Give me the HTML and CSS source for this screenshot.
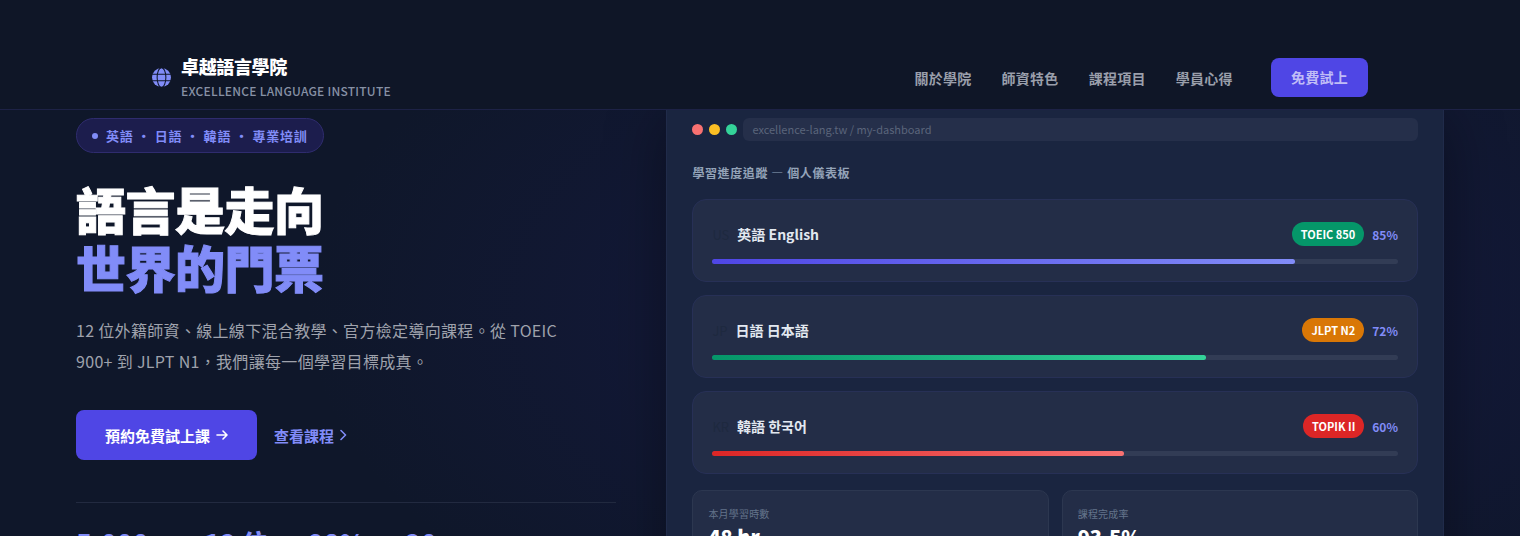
FILE: index.html
```
<!DOCTYPE html>
<html lang="zh-Hant">
<head>
    <meta charset="UTF-8">
    <meta name="viewport" content="width=device-width, initial-scale=1.0">
    <title>卓越語言學院</title>
    <link rel="stylesheet" href="styles.css">
</head>
<body>
<header class="site-header">
    <a class="logo" href="#">
        <svg class="logo-icon" viewBox="0 0 20 20" aria-hidden="true">
            <circle cx="10" cy="10" r="10" fill="#818cf8"/>
            <g fill="none" stroke="#0f172a" stroke-width="1.1">
                <ellipse cx="10" cy="10" rx="4.6" ry="10.400"/>
                <path d="M0 6.6h20M0 13.4h20"/>
            </g>
        </svg>
        <span class="logo-text">
            <span class="logo-name">卓越語言學院</span>
            <span class="logo-sub">EXCELLENCE LANGUAGE INSTITUTE</span>
        </span>
    </a>
    <nav class="nav">
        <a href="#about">關於學院</a>
        <a href="#teachers">師資特色</a>
        <a href="#courses">課程項目</a>
        <a href="#reviews">學員心得</a>
        <a class="nav-cta" href="#trial">免費試上</a>
    </nav>
</header>

<main class="hero">
    <section class="hero-copy">
        <div class="hero-tag"><i class="tag-dot"></i>英語 ・ 日語 ・ 韓語 ・ 專業培訓</div>
        <h1 class="hero-title">語言是走向<br><span>世界的門票</span></h1>
        <p class="hero-desc">12 位外籍師資、線上線下混合教學、官方檢定導向課程。從 TOEIC 900+ 到 JLPT N1，我們讓每一個學習目標成真。</p>
        <div class="hero-actions">
            <button class="btn-primary" type="button">預約免費試上課
                <svg width="12" height="12" viewBox="0 0 12 12" aria-hidden="true"><path d="M1 6h10M7 2l4 4-4 4"/></svg>
            </button>
            <a class="btn-link" href="#courses">查看課程
                <svg width="8" height="12" viewBox="0 0 8 12" aria-hidden="true"><path d="M1 1.500L5.500 6L1 10.500"/></svg>
            </a>
        </div>
        <div class="hero-stats">
            <div class="stat">5,000+</div>
            <div class="stat">12 位</div>
            <div class="stat">98%</div>
            <div class="stat">20+</div>
        </div>
    </section>

    <section class="dashboard">
        <div class="window-bar">
            <i class="dot dot-red"></i>
            <i class="dot dot-yellow"></i>
            <i class="dot dot-green"></i>
            <div class="window-url">excellence-lang.tw / my-dashboard</div>
        </div>
        <h2 class="dashboard-title">學習進度追蹤 — 個人儀表板</h2>
        <div class="course-list">
            <div class="course">
                <div class="course-head">
                    <span class="flag">US</span>
                    <span class="course-name">英語 English</span>
                    <span class="badge badge-green">TOEIC 850</span>
                    <span class="percent">85%</span>
                </div>
                <div class="track"><div class="fill fill-indigo" style="width: 85%"></div></div>
            </div>
            <div class="course">
                <div class="course-head">
                    <span class="flag">JP</span>
                    <span class="course-name">日語 日本語</span>
                    <span class="badge badge-orange">JLPT N2</span>
                    <span class="percent">72%</span>
                </div>
                <div class="track"><div class="fill fill-green" style="width: 72%"></div></div>
            </div>
            <div class="course">
                <div class="course-head">
                    <span class="flag">KR</span>
                    <span class="course-name">韓語 한국어</span>
                    <span class="badge badge-red">TOPIK II</span>
                    <span class="percent">60%</span>
                </div>
                <div class="track"><div class="fill fill-red" style="width: 60%"></div></div>
            </div>
        </div>
        <div class="summary">
            <div class="summary-card">
                <div class="summary-label">本月學習時數</div>
                <div class="summary-value">48 hr</div>
            </div>
            <div class="summary-card">
                <div class="summary-label">課程完成率</div>
                <div class="summary-value">93.5%</div>
            </div>
        </div>
    </section>
</main>
</body>
</html>
```
FILE: styles.css
```
*{
    box-sizing: border-box;
    margin: 0;
    padding: 0;
}
body{
    background: #0f172a;
    color: #fff;
    font-family: "Noto Sans CJK TC", "Noto Sans", sans-serif;
    font-size: 16px;
}
a{
    color: inherit;
    text-decoration: none;
}

/* header */
.site-header{
    position: fixed;
    top: 0;
    left: 0;
    right: 0;
    z-index: 10;
    display: flex;
    align-items: center;
    justify-content: space-between;
    padding: 46px 10% 0;
    height: 110px;
    background: #0f1627;
    border-bottom: 1px solid #1d2246;
}
.logo{
    display: flex;
    align-items: center;
    gap: 10px;
}
.logo-icon{
    width: 19px;
    height: 19px;
}
.logo-text{
    display: flex;
    flex-direction: column;
}
.logo-name{
    font-size: 18px;
    line-height: 26px;
    font-weight: 900;
    letter-spacing: -0.02em;
}
.logo-sub{
    font-size: 12px;
    line-height: 24px;
    letter-spacing: 0.02em;
    font-weight: 500;
    color: #8791a5;
}
.nav{
    display: flex;
    align-items: center;
    gap: 30px;
    font-size: 14px;
    font-weight: 600;
    letter-spacing: 0.02em;
    color: #9a9fab;
}
.nav-cta{
    margin-left: 8px;
    padding: 0 20px;
    line-height: 39px;
    border-radius: 8px;
    background: #4f46e5;
    color: #c0bdf6;
}

/* hero */
.hero{
    display: grid;
    grid-template-columns: 41fr 59fr;
    gap: 50px;
    height: 100vh;
    overflow: hidden;
    padding: 92px 5% 0;
    background: radial-gradient(ellipse 50% 75% at 70% 58%, rgba(36, 32, 120, 0.32), transparent);
}
.hero-copy{
    padding-top: 26px;
}
.hero-tag{
    display: inline-flex;
    align-items: center;
    gap: 8px;
    height: 35px;
    padding: 0 15px;
    border: 1px solid #2f2c6e;
    border-radius: 18px;
    background: #1c1d4d;
    color: #818cf8;
    font-size: 13px;
    font-weight: 600;
    letter-spacing: 0.06em;
}
.tag-dot{
    width: 6px;
    height: 6px;
    border-radius: 50%;
    background: #818cf8;
}
.hero-title{
    margin-top: 26px;
    font-size: 50px;
    line-height: 58px;
    font-weight: 900;
    letter-spacing: -0.01em;
    -webkit-text-stroke: 1px;
}
.hero-title span{
    color: #818cf8;
}
.hero-desc{
    max-width: 500px;
    margin-top: 20px;
    line-height: 31px;
    letter-spacing: 0.02em;
    color: #9fa2ac;
}
.hero-actions{
    display: flex;
    align-items: center;
    gap: 17px;
    margin-top: 33px;
}
.hero-actions svg{
    fill: none;
    stroke: currentColor;
    stroke-width: 1.6;
    stroke-linecap: round;
    stroke-linejoin: round;
}
.btn-primary,
.btn-link{
    display: flex;
    align-items: center;
    gap: 6px;
    font: inherit;
    font-size: 15px;
    font-weight: 700;
}
.btn-primary{
    height: 50px;
    padding: 0 29px;
    border: none;
    border-radius: 8px;
    background: #4f46e5;
    color: #fff;
    cursor: pointer;
}
.btn-link{
    color: #818cf8;
}
.hero-stats{
    display: flex;
    gap: 40px;
    margin-top: 42px;
    padding-top: 20px;
    border-top: 1px solid #222a40;
}
.stat{
    font-size: 26px;
    line-height: 40px;
    font-weight: 900;
    color: #818cf8;
}

/* dashboard */
.dashboard{
    padding: 25px;
    border: 1px solid #202b4a;
    border-radius: 16px;
    background: #1a2540;
    box-shadow: 0 24px 60px rgba(0, 0, 0, 0.4);
}
.window-bar{
    display: flex;
    align-items: center;
    gap: 6px;
}
.dot{
    width: 11px;
    height: 11px;
    border-radius: 50%;
}
.dot-red{
    background: #f87171;
}
.dot-yellow{
    background: #fbbf24;
}
.dot-green{
    background: #34d399;
}
.window-url{
    flex: 1;
    padding: 0 9px;
    border-radius: 6px;
    background: #252f4a;
    color: #5b657b;
    font-size: 11px;
    line-height: 23px;
}
.dashboard-title{
    margin: 21px 0 15px;
    font-size: 12px;
    line-height: 22px;
    font-weight: 600;
    letter-spacing: 0.05em;
    color: #94a3b8;
}
.course-list{
    display: grid;
    gap: 13px;
}
.course{
    padding: 17px 19px;
    border: 1px solid #273056;
    border-radius: 14px;
    background: #232d47;
}
.course-head{
    display: flex;
    align-items: center;
    gap: 8px;
    height: 34px;
    margin-bottom: 8px;
}
.flag{
    font-size: 13px;
    color: #1e293f;
}
.course-name{
    flex: 1;
    font-size: 14px;
    font-weight: 700;
    color: #e2e8f0;
}
.badge{
    padding: 0 9px;
    border-radius: 12px;
    font-size: 11px;
    line-height: 24px;
    font-weight: 700;
}
.badge-green{
    background: #059669;
}
.badge-orange{
    background: #d97706;
}
.badge-red{
    background: #dc2626;
}
.percent{
    font-size: 12px;
    font-weight: 600;
    color: #818cf8;
}
.track{
    height: 5px;
    border-radius: 3px;
    background: #323c55;
}
.fill{
    height: 100%;
    border-radius: 3px;
}
.fill-indigo{
    background: linear-gradient(90deg, #4f46e5, #818cf8);
}
.fill-green{
    background: linear-gradient(90deg, #059669, #34d399);
}
.fill-red{
    background: linear-gradient(90deg, #dc2626, #f87171);
}
.summary{
    display: grid;
    grid-template-columns: 1fr 1fr;
    gap: 13px;
    margin-top: 16px;
}
.summary-card{
    padding: 13px 15px;
    border: 1px solid #2c3750;
    border-radius: 10px;
    background: #232d47;
}
.summary-label{
    font-size: 10px;
    line-height: 20px;
    letter-spacing: 0.02em;
    color: #64748b;
}
.summary-value{
    font-size: 20px;
    line-height: 25px;
    font-weight: 900;
}
```
